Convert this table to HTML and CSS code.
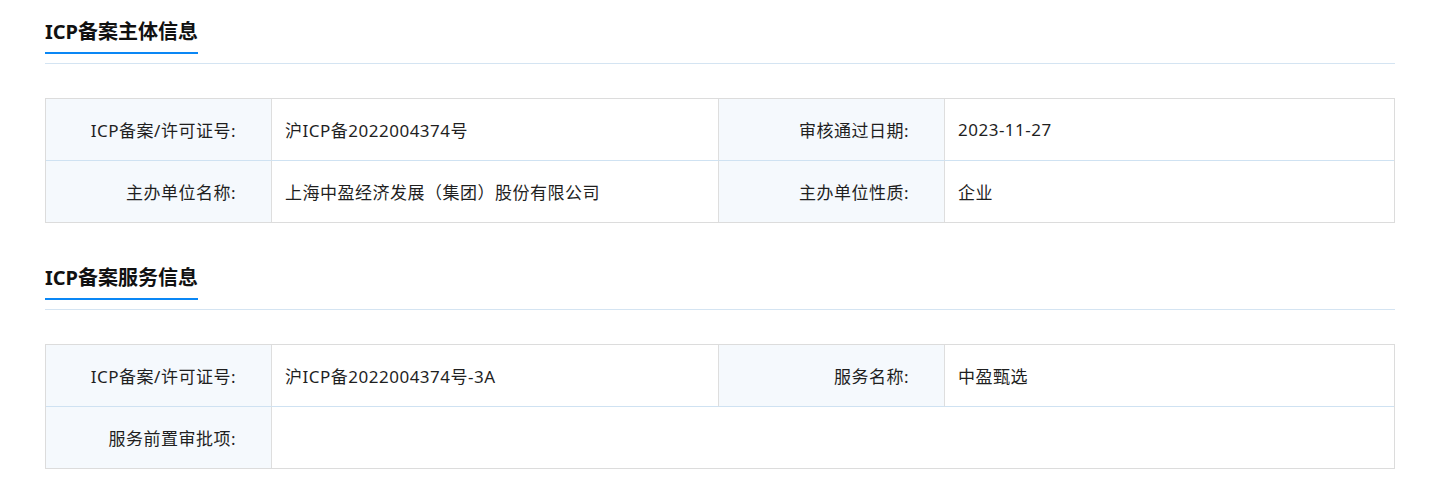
FILE: index.html
```html
<!DOCTYPE html>
<html lang="zh-CN">
<head>
<meta charset="utf-8">
<title>ICP备案信息</title>
<link rel="stylesheet" href="styles.css">
</head>
<body>
<div class="page">
  <section class="section">
    <div class="section-head"><h2 class="section-title">ICP备案主体信息</h2></div>
    <div class="info-grid">
      <div class="cell label">ICP备案/许可证号:</div>
      <div class="cell value">沪ICP备2022004374号</div>
      <div class="cell label">审核通过日期:</div>
      <div class="cell value last-col">2023-11-27</div>
      <div class="cell label last-row">主办单位名称:</div>
      <div class="cell value last-row">上海中盈经济发展（集团）股份有限公司</div>
      <div class="cell label last-row">主办单位性质:</div>
      <div class="cell value last-row last-col">企业</div>
    </div>
  </section>
  <section class="section section-second">
    <div class="section-head"><h2 class="section-title">ICP备案服务信息</h2></div>
    <div class="info-grid">
      <div class="cell label">ICP备案/许可证号:</div>
      <div class="cell value">沪ICP备2022004374号-3A</div>
      <div class="cell label">服务名称:</div>
      <div class="cell value last-col">中盈甄选</div>
      <div class="cell label last-row">服务前置审批项:</div>
      <div class="cell value last-row last-col span-3"></div>
    </div>
  </section>
</div>
</body>
</html>
```
FILE: styles.css
```css
html, body {
  margin: 0;
  padding: 0;
  background: #ffffff;
}

body {
  font-family: "Noto Sans", "Noto Sans CJK SC", sans-serif;
  color: #222222;
}

.page {
  width: 1350px;
  margin-left: 45px;
  padding-top: 20px;
}

.section-second {
  margin-top: 43px;
}

.section-head {
  display: flex;
  padding-bottom: 9px;
  border-bottom: 1px solid #d4e4f2;
}

.section-title {
  margin: 0;
  font-size: 20px;
  line-height: 24px;
  font-weight: 700;
  color: #111111;
  letter-spacing: 0;
  padding-bottom: 8px;
  border-bottom: 2px solid #0a87f5;
}

.info-grid {
  margin-top: 34px;
  display: grid;
  grid-template-columns: 226px 447px 226px 1fr;
  border: 1px solid #dcdcdc;
}

.cell {
  box-sizing: border-box;
  height: 62px;
  display: flex;
  align-items: center;
  font-size: 17px;
  letter-spacing: 0.5px;
  color: #1f1f1f;
  border-right: 1px solid #dedede;
  border-bottom: 1px solid #cfe2f2;
}

.label {
  background: #f5f9fd;
  justify-content: flex-end;
  padding-right: 35px;
}

.value {
  padding-left: 13px;
}

.last-col {
  border-right: none;
}

.last-row {
  border-bottom: none;
  height: 61px;
}

.span-3 {
  grid-column: span 3;
}
```
